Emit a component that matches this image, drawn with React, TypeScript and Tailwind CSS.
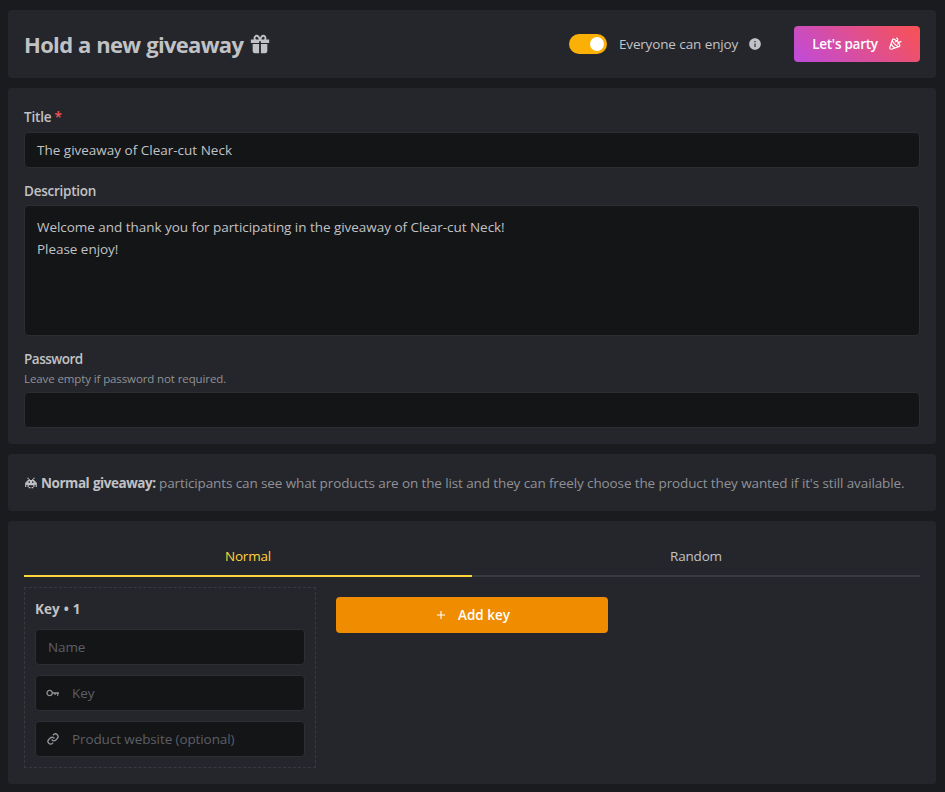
import type { ReactNode } from "react";
import {
  BiKey,
  BiLink,
  BiParty,
  BiPlus,
  BiSolidGift,
  BiSolidInfoCircle,
  BiSolidInvader,
} from "react-icons/bi";

const fieldBox = "rounded-[4px] border border-[#2c2e33] bg-[#141517]";

function Card({ className, children }: { className: string; children: ReactNode }) {
  return <section className={`rounded-[4px] bg-[#25262b] px-4 ${className}`}>{children}</section>;
}

function Label({ className, children }: { className: string; children: ReactNode }) {
  return <label className={`block h-[22px] font-semibold leading-[22px] ${className}`}>{children}</label>;
}

function KeyField({ icon, placeholder }: { icon?: ReactNode; placeholder: string }) {
  return (
    <div className={`flex h-9 items-center tracking-[-0.1px] text-[#5c5f66] ${fieldBox}`}>
      {icon ? (
        <span className="flex w-9 pl-[9px] text-[#909296]">{icon}</span>
      ) : (
        <span className="w-3" />
      )}
      <span>{placeholder}</span>
    </div>
  );
}

export default function App() {
  return (
    <main className="flex h-[792px] w-[945px] flex-col gap-2.5 overflow-hidden bg-[#1a1b1e] pt-2.5 pr-[9px] pl-2 font-['Open_Sans','Segoe_UI',sans-serif] text-[13.5px] leading-[22px] text-[#c1c2c5]">
      <Card className="flex h-[68px] items-center">
        <h1 className="flex items-center text-[22px] font-bold tracking-[-0.68px] [word-spacing:0.6px]">
          Hold a new giveaway
          <BiSolidGift size={22} className="ml-[6px]" />
        </h1>
        <div className="ml-auto flex items-center">
          <span className="flex h-5 w-[38px] items-center justify-end rounded-full bg-[#fab005] pr-[3px]">
            <span className="size-3.5 rounded-full bg-white" />
          </span>
          <span className="ml-3 w-[119px] whitespace-nowrap tracking-[-0.18px] [word-spacing:0.4px]">Everyone can enjoy</span>
          <BiSolidInfoCircle size={14} className="ml-[10px]" />
          <button className="ml-8 flex h-9 w-[126px] items-center rounded-[4px] bg-linear-[45deg,#be4bdb,#fa5252] pl-[18px] font-semibold text-white">
            <span className="w-[66px] whitespace-nowrap tracking-[-0.25px]">Let's party</span>
            <BiParty size={14} className="ml-2.5" />
          </button>
        </div>
      </Card>

      <Card className="h-[356px] pt-[18px]">
        <Label className="mb-1 tracking-[-0.2px]">
          Title <span className="text-[#fa5252]">*</span>
        </Label>
        <div className={`flex h-9 items-center pl-3 ${fieldBox}`}>The giveaway of Clear-cut Neck</div>
        <Label className="mt-3 mb-[3px] tracking-[-0.25px]">Description</Label>
        <div className={`h-[131px] pt-[10px] pl-3 tracking-[-0.04px] ${fieldBox}`}>
          <p>Welcome and thank you for participating in the giveaway of Clear-cut Neck!</p>
          <p>Please enjoy!</p>
        </div>
        <Label className="mt-3 tracking-[-0.5px]">Password</Label>
        <p className="mb-[5px] h-[17px] text-[11.5px] leading-[17px] tracking-[-0.11px] text-[#909296]">
          Leave empty if password not required.
        </p>
        <div className={`h-9 ${fieldBox}`} />
      </Card>

      <Card className="flex h-[57px] items-center whitespace-nowrap">
        <BiSolidInvader size={14} />
        <strong className="ml-[3px] w-[118px] font-bold tracking-[-0.46px] [word-spacing:0.6px]">Normal giveaway:</strong>
        <span className="tracking-[-0.114px] text-[#909296]">
          participants can see what products are on the list and they can freely choose the product they wanted
          if it's still available.
        </span>
      </Card>

      <Card className="h-[263px] pt-4">
        <div className="flex h-10 text-center tracking-[-0.2px]">
          <div className="flex-1 border-b-2 border-[#ffd43b] pt-2 text-[#ffd43b]">Normal</div>
          <div className="flex-1 border-b-2 border-[#373a40] pt-2">Random</div>
        </div>
        <div className="mt-2.5 flex items-start gap-5">
          <div className="flex h-[181px] w-[292px] flex-col gap-2.5 border border-dashed border-[#373a40] px-2.5 pt-[10px]">
            <strong className="h-[21px] font-bold leading-[22px] [word-spacing:0.5px]">Key • 1</strong>
            <KeyField placeholder="Name" />
            <KeyField icon={<BiKey size={16} />} placeholder="Key" />
            <KeyField icon={<BiLink size={16} />} placeholder="Product website (optional)" />
          </div>
          <button className="mt-2.5 flex h-9 w-[272px] items-center justify-center gap-2.5 rounded-[4px] bg-[#f08c00] font-semibold text-white">
            <BiPlus size={14} />
            Add key
          </button>
        </div>
      </Card>
    </main>
  );
}
